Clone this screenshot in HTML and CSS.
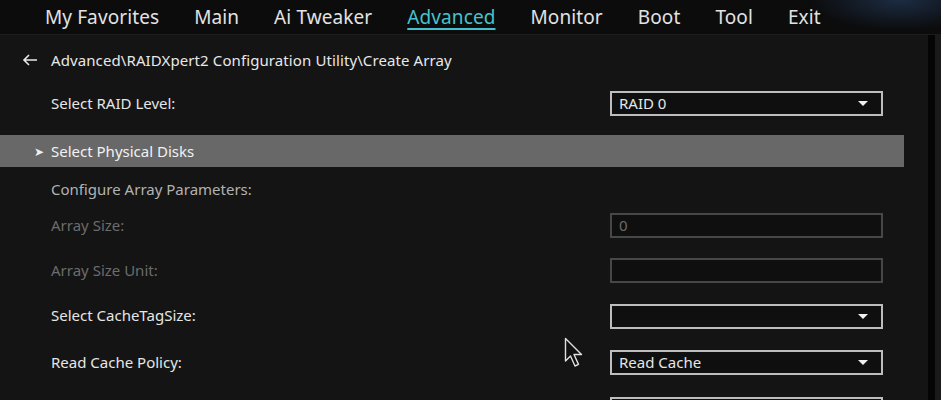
FILE: index.html
```html
<!DOCTYPE html>
<html lang="en">
<head>
    <meta charset="UTF-8">
    <title>RAIDXpert2 - Create Array</title>
    <link rel="stylesheet" href="styles.css">
</head>
<body>

<!-- Top menu -->
<div class="nav">
    <div class="tab">My Favorites</div>
    <div class="tab">Main</div>
    <div class="tab">Ai Tweaker</div>
    <div class="tab active">Advanced</div>
    <div class="tab">Monitor</div>
    <div class="tab">Boot</div>
    <div class="tab">Tool</div>
    <div class="tab">Exit</div>
</div>

<div class="page">
    <div class="panel">
        <div class="crumb">
            <svg class="back" width="16" height="12" viewBox="0 0 16 12">
                <path d="M15 6H2M7 1L2 6l5 5" fill="none" stroke="#e8e8e8" stroke-width="1.6"/>
            </svg>
            Advanced\RAIDXpert2 Configuration Utility\Create Array
        </div>

        <div class="row row-first">
            <div class="label">Select RAID Level:</div>
            <div class="box">RAID 0<span class="caret"></span></div>
        </div>

        <div class="row highlight">
            <span class="chev">&#x27A4;</span>
            <div class="label">Select Physical Disks</div>
        </div>

        <div class="row row-section">
            <div class="label muted">Configure Array Parameters:</div>
        </div>

        <div class="row h45">
            <div class="label dim">Array Size:</div>
            <div class="box off">0</div>
        </div>
        <div class="row h45">
            <div class="label dim">Array Size Unit:</div>
            <div class="box off"></div>
        </div>
        <div class="row h46">
            <div class="label">Select CacheTagSize:</div>
            <div class="box"><span class="caret"></span></div>
        </div>
        <div class="row h47">
            <div class="label">Read Cache Policy:</div>
            <div class="box">Read Cache<span class="caret"></span></div>
        </div>
        <div class="row h47">
            <div class="label">Write Cache Policy:</div>
            <div class="box">Write Back<span class="caret"></span></div>
        </div>
    </div>
    <div class="edge"></div>
    <div class="side"></div>
</div>

<!-- mouse pointer -->
<svg class="pointer" width="20" height="31" viewBox="0 0 20 31">
    <path d="M1.5 1.5V24l5-5 4.5 10 3.5-1.6-4.5-9.9h7.5z" fill="#111" stroke="#e0e0e0" stroke-width="1.4" stroke-linejoin="round"/>
</svg>

</body>
</html>
```

FILE: styles.css
```css
/* Reset */
* {
    margin: 0;
    padding: 0;
    box-sizing: border-box;
}
body {
    width: 941px;
    height: 400px;
    overflow: hidden;
    background: #141414;
    color: #e6e6e6;
    font-family: "Noto Sans", "Open Sans", sans-serif;
    position: relative;
}
/* Top menu */
.nav {
    height: 35px;
    display: flex;
    gap: 35px;
    padding-left: 45px;
    background: radial-gradient(ellipse 90px 30px at 900px 0, rgba(40, 70, 110, 0.55), rgba(0, 0, 0, 0) 100%), #0c0c0d;
    border-bottom: 1px solid #1c1c1c;
}
.tab {
    font-size: 19px;
    letter-spacing: 0.1px;
    line-height: 34px;
    color: #e2e2e2;
}
.tab.active {
    color: #45c3cc;
    text-decoration: underline;
    text-underline-offset: 4px;
    text-decoration-thickness: 2px;
}
/* Page body */
.page {
    display: flex;
    height: 365px;
}
.panel {
    width: 928px;
    background: #141414;
}
.edge {
    width: 7px;
    background: #050505;
}
.side {
    flex: 1;
    background: #1a1a1a;
}
.crumb {
    height: 49px;
    display: flex;
    align-items: center;
    padding-left: 22px;
    font-size: 15px;
    letter-spacing: 0.1px;
    color: #e8e8e8;
}
.back {
    margin-right: 13px;
}
/* Option rows */
.row {
    display: flex;
    align-items: center;
    padding-left: 51px;
    font-size: 15px;
}
.row-first {
    height: 39px;
}
.highlight {
    height: 32px;
    margin-top: 12px;
    width: 904px;
    background: #686868;
    padding-left: 34px;
    color: #f2f2f2;
}
.chev {
    font-size: 12px;
    width: 17px;
    color: #f0f0f0;
}
.row-section {
    height: 36px;
    align-items: flex-end;
    padding-bottom: 2px;
}
.h45 { height: 45px; }
.h46 { height: 46px; }
.h47 { height: 47px; }
.label {
    width: 559px;
    line-height: 20px;
    padding-bottom: 2px;
}
.highlight .label {
    padding-bottom: 0;
}
.muted { color: #b2b2b2; }
.dim { color: #6c6c6c; }
.box {
    width: 273px;
    height: 25px;
    border: 2px solid #bdbdbd;
    background: #0f0f0f;
    padding-left: 7px;
    line-height: 21px;
    color: #e6e6e6;
    position: relative;
}
.box.off {
    border-color: #474747;
    color: #6a6a6a;
}
.caret {
    position: absolute;
    right: 13px;
    top: 8px;
    border-left: 5px solid transparent;
    border-right: 5px solid transparent;
    border-top: 5px solid #f0f0f0;
}
.pointer {
    position: absolute;
    left: 564px;
    top: 337px;
}
```
